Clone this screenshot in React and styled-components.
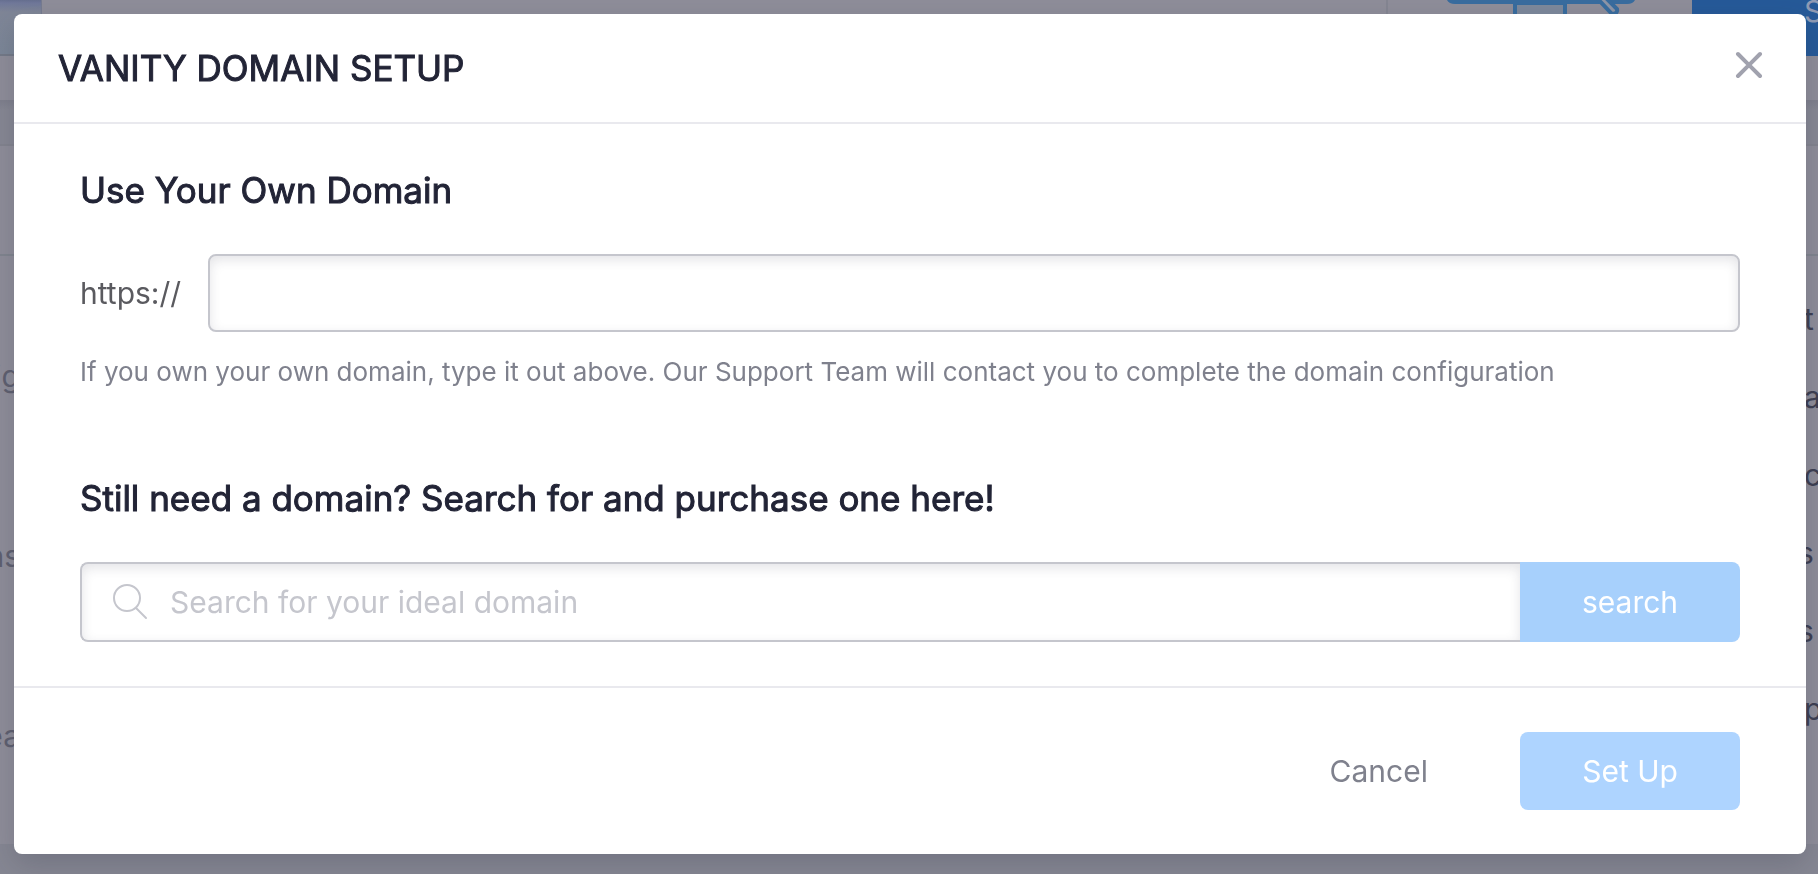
import React, { useState } from "react";
import styled, { createGlobalStyle } from "styled-components";

const GlobalStyle = createGlobalStyle`
  * {
    box-sizing: border-box;
  }

  body {
    margin: 0;
    background: #8f8e9a;
    font-family: Inter, "Liberation Sans", sans-serif;
    overflow: hidden;
  }

  h1, h2, p {
    margin: 0;
  }

  button, input {
    font-family: inherit;
  }
`;

// Dimmed page behind the dialog
const Page = styled.div`
  min-height: 100vh;
  display: flex;
  flex-direction: column;
`;

const TopBar = styled.div`
  height: 56px;
  display: flex;
  justify-content: space-between;
`;

const Thumb = styled.div`
  width: 42px;
  background: linear-gradient(#666f90 0, #70789a 3px, #7f8697 12px, #7c8798 100%);
  border-right: 1px solid #777c90;
  border-bottom: 2px solid #747a88;
`;

const TopActions = styled.div`
  display: flex;
`;

const IconCell = styled.div`
  width: 306px;
  padding-left: 58px;
  border-left: 2px solid #858692;
`;

const PrimaryBlock = styled.div`
  width: 126px;
  padding-left: 112px;
  background: #265a99;
  color: #8f9bb5;
  font-size: 30px;
  line-height: 22px;
  white-space: nowrap;
`;

const SubBar = styled.div`
  height: 44px;
`;

const Strip = styled.div`
  height: 46px;
  background: linear-gradient(#7f808d, #878894 10px);
  border-bottom: 2px solid #83848f;
`;

const FilterRow = styled.div`
  height: 110px;
  border-bottom: 2px solid #81858f;
`;

const Columns = styled.div`
  flex: 1;
  display: flex;
  justify-content: space-between;
`;

const Column = styled.div`
  width: 20px;
  padding-top: ${({ $top }) => $top}px;
  color: ${({ $color }) => $color};
  font-size: 30px;
  line-height: ${({ $line }) => $line}px;
`;

const Cell = styled.div`
  display: flex;
  justify-content: ${({ $end }) => ($end ? "flex-end" : "flex-start")};
  padding-left: ${({ $indent }) => ($indent ? "6px" : "0")};
`;

const PageFooter = styled.div`
  height: 30px;
  background: #868793;
`;

// Dialog
const Overlay = styled.div`
  position: fixed;
  inset: 0;
  padding: 14px 12px 20px 14px;
`;

const Dialog = styled.div`
  background: #ffffff;
  border-radius: 8px;
  box-shadow: 0 10px 30px rgba(40, 44, 66, 0.22);
`;

const Header = styled.header`
  display: flex;
  align-items: center;
  justify-content: space-between;
  padding: 32px 40px 32px 44px;
  border-bottom: 2px solid #e9e9ee;
`;

const Title = styled.h1`
  color: #222436;
  font-size: 35px;
  font-weight: 400;
  line-height: 44px;
  -webkit-text-stroke: 1px #222436;
`;

const CloseButton = styled.button`
  display: flex;
  padding: 0 0 6px;
  border: 0;
  background: none;
  cursor: pointer;
`;

const Body = styled.div`
  padding: 44px 66px;
`;

const Heading = styled.h2`
  margin-bottom: 42px;
  color: #222436;
  font-size: 35px;
  font-weight: 400;
  line-height: 44px;
  -webkit-text-stroke: 1px #222436;
`;

const UrlRow = styled.div`
  display: flex;
  align-items: center;
  gap: 22px;
`;

const Prefix = styled.label`
  min-width: 106px;
  color: #5a5a5f;
  font-size: 30px;
  line-height: 40px;
`;

const UrlInput = styled.input`
  flex: 1;
  min-width: 0;
  height: 78px;
  padding: 0 24px;
  border: 2px solid #c5c6cd;
  border-radius: 8px;
  box-shadow: inset 0 4px 12px rgba(34, 36, 54, 0.12);
  font-size: 30px;
  outline: none;
`;

const Help = styled.p`
  margin: 24px 0 88px;
  color: #7f818d;
  font-size: 26px;
  line-height: 32px;
`;

const SearchRow = styled.form`
  display: flex;
  height: 80px;
`;

const SearchField = styled.label`
  flex: 1;
  min-width: 0;
  display: flex;
  align-items: center;
  gap: 20px;
  padding-left: 30px;
  border: 2px solid #c5c6cd;
  border-right: 0;
  border-radius: 8px 0 0 8px;
  box-shadow: inset 0 4px 12px rgba(34, 36, 54, 0.12);
`;

const SearchInput = styled.input`
  flex: 1;
  min-width: 0;
  padding: 0;
  border: 0;
  background: none;
  color: #222436;
  font-size: 30px;
  line-height: 40px;
  outline: none;

  &::placeholder {
    color: #c5c6cd;
    opacity: 1;
  }
`;

const Button = styled.button`
  width: 220px;
  height: ${({ $attached }) => ($attached ? "80px" : "78px")};
  border: 0;
  border-radius: ${({ $attached }) => ($attached ? "0 8px 8px 0" : "8px")};
  background: ${({ $attached }) => ($attached ? "#a7d0fc" : "#aed4ff")};
  color: #ffffff;
  font-size: 30px;
  cursor: pointer;
`;

const Footer = styled.footer`
  display: flex;
  align-items: center;
  justify-content: flex-end;
  gap: 92px;
  padding: 44px 66px;
  border-top: 2px solid #e9e9ee;
`;

const CancelButton = styled.button`
  padding: 0;
  border: 0;
  background: none;
  color: #7f818d;
  font-size: 30px;
  cursor: pointer;
`;

const DesignIcon = () => (
  <svg width="190" height="16" viewBox="0 0 190 16" fill="none" stroke="#396d9f" strokeWidth="4">
    <path d="M69 3h50v18H69z" fill="#7d899c" />
    <path d="M2 -5q0 7 7 7h172q7 0 7-7" fill="#7d899c" />
    <path d="M149 -4l17 18q6 0 5-5l-13-13" fill="#8f96a7" />
  </svg>
);

const CloseIcon = () => (
  <svg width="34" height="34" viewBox="0 0 34 34" fill="none" stroke="#a1a2ae" strokeWidth="4" strokeLinecap="round">
    <path d="M6 6l22 22M28 6L6 28" />
  </svg>
);

const SearchIcon = () => (
  <svg width="38" height="40" viewBox="0 0 38 40" fill="none" stroke="#c5c6cd" strokeWidth="2" strokeLinecap="round">
    <circle cx="15" cy="16" r="13" />
    <path d="M24 26l10 10" />
  </svg>
);

const leftCells = ["ig", "ns", "ea"];
const rightCells = [
  { text: "t", indent: true },
  { text: "a", indent: true },
  { text: "c", indent: true },
  { text: "s" },
  { text: "s" },
  { text: "p", indent: true },
];

const App = () => {
  const [domain, setDomain] = useState("");
  const [query, setQuery] = useState("");

  return (
    <>
      <GlobalStyle />
      <Page aria-hidden="true">
        <TopBar>
          <Thumb />
          <TopActions>
            <IconCell>
              <DesignIcon />
            </IconCell>
            <PrimaryBlock>S</PrimaryBlock>
          </TopActions>
        </TopBar>
        <SubBar />
        <Strip />
        <FilterRow />
        <Columns>
          <Column $top={30} $line={180} $color="#5f6070">
            {leftCells.map((text) => (
              <Cell key={text} $end>{text}</Cell>
            ))}
          </Column>
          <Column $top={24} $line={78} $color="#3d3f52">
            {rightCells.map((cell, i) => (
              <Cell key={i} $indent={cell.indent}>{cell.text}</Cell>
            ))}
          </Column>
        </Columns>
        <PageFooter />
      </Page>

      <Overlay>
        <Dialog role="dialog" aria-modal="true" aria-labelledby="dialog-title">
          <Header>
            <Title id="dialog-title">VANITY DOMAIN SETUP</Title>
            <CloseButton type="button" aria-label="Close">
              <CloseIcon />
            </CloseButton>
          </Header>

          <Body>
            <Heading>Use Your Own Domain</Heading>
            <UrlRow>
              <Prefix htmlFor="own-domain">https://</Prefix>
              <UrlInput
                id="own-domain"
                type="text"
                value={domain}
                onChange={(e) => setDomain(e.target.value)}
              />
            </UrlRow>
            <Help>
              If you own your own domain, type it out above. Our Support Team will contact you to complete the domain configuration
            </Help>

            <Heading>Still need a domain? Search for and purchase one here!</Heading>
            <SearchRow onSubmit={(e) => e.preventDefault()}>
              <SearchField>
                <SearchIcon />
                <SearchInput
                  type="text"
                  aria-label="Search for your ideal domain"
                  placeholder="Search for your ideal domain"
                  value={query}
                  onChange={(e) => setQuery(e.target.value)}
                />
              </SearchField>
              <Button type="submit" $attached>search</Button>
            </SearchRow>
          </Body>

          <Footer>
            <CancelButton type="button">Cancel</CancelButton>
            <Button type="button">Set Up</Button>
          </Footer>
        </Dialog>
      </Overlay>
    </>
  );
};

export default App;
